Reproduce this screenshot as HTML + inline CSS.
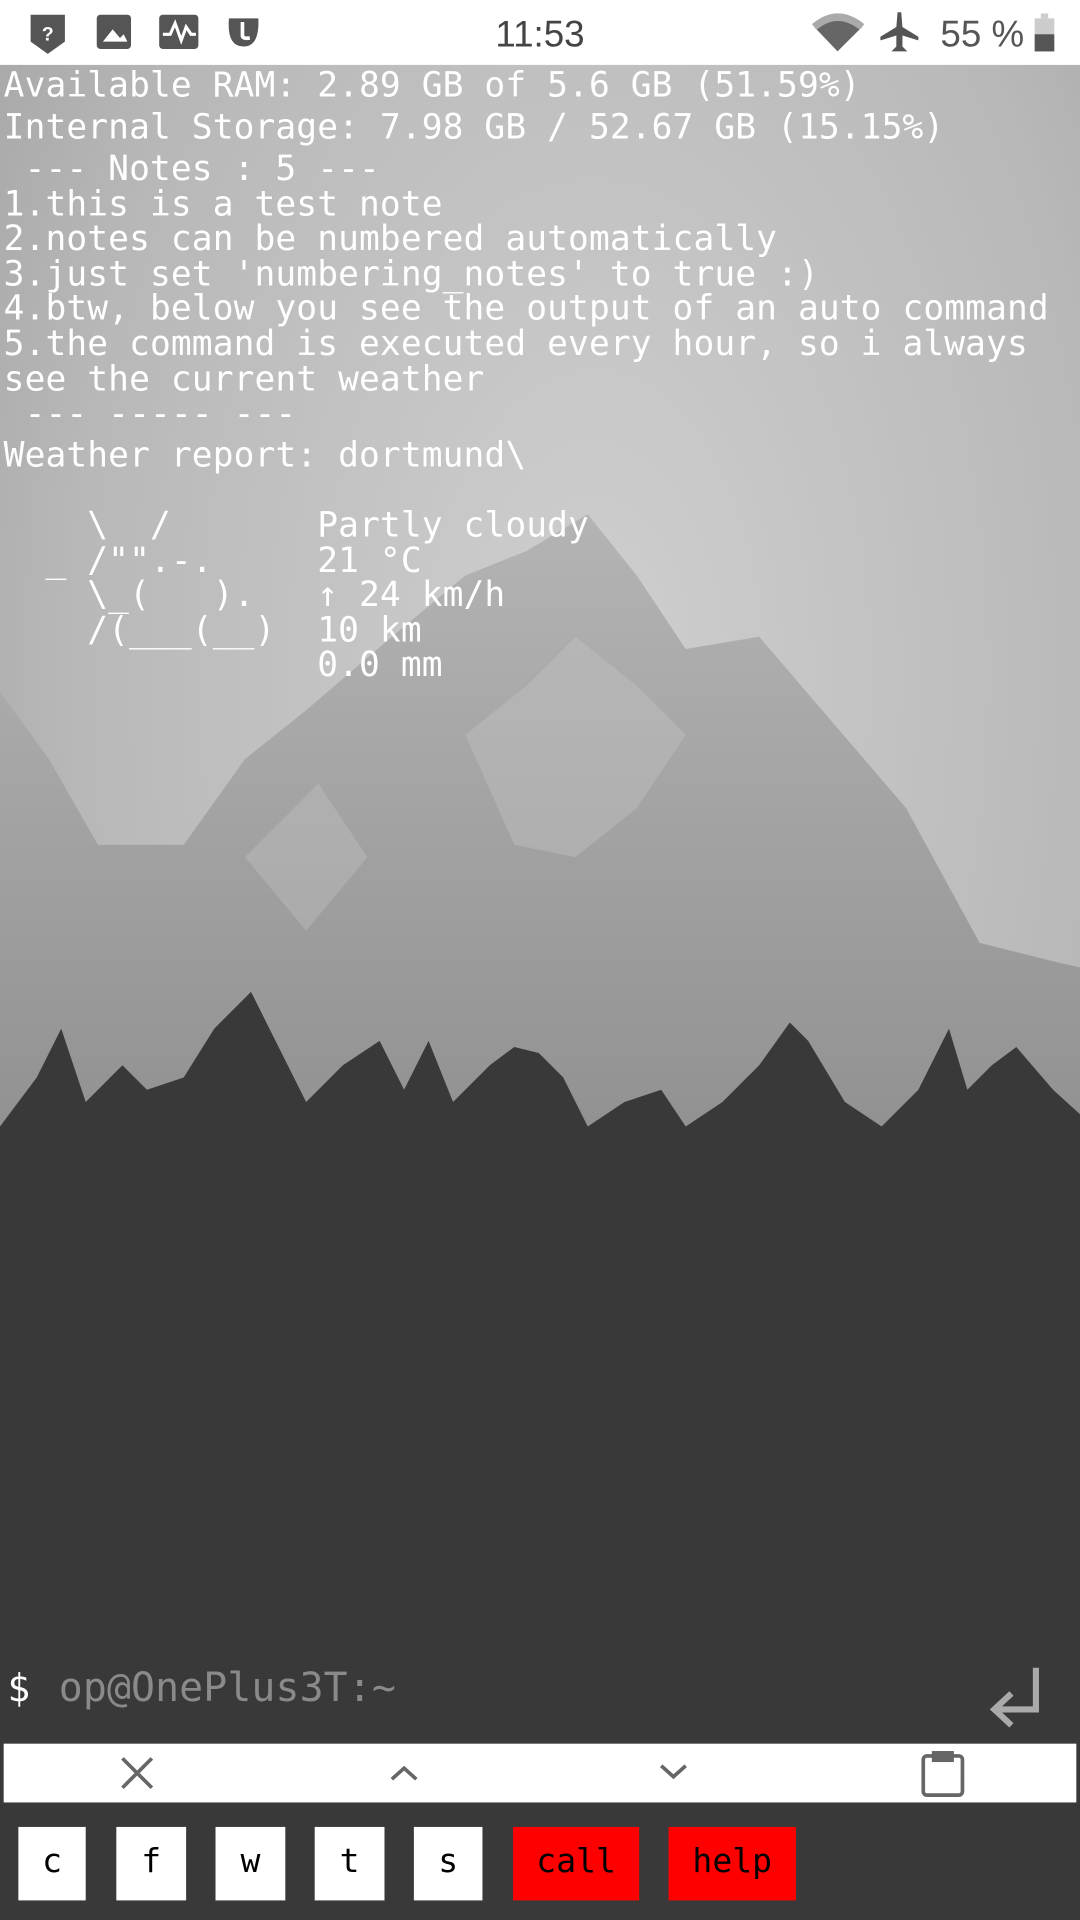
<!DOCTYPE html>
<html><head><meta charset="utf-8"><style>
html,body{margin:0;padding:0;width:1080px;height:1920px;overflow:hidden;background:#363638}
#s{position:absolute;left:0;top:0;width:882px;height:1568px;transform:scale(1.2244898);transform-origin:0 0;overflow:hidden}
.mono{font-family:"DejaVu Sans Mono","Liberation Mono",monospace;font-size:28.2px;color:#fff;white-space:pre;position:absolute;left:3px;letter-spacing:0.1px}
.st{position:absolute;top:0;left:0;width:882px;height:53px;background:#fff}
.bar{position:absolute;left:3px;top:1424px;width:876px;height:48px;background:#fff}
.k{position:absolute;top:1492px;height:60px;background:#fff;font-family:"DejaVu Sans Mono",monospace;font-size:27px;color:#000;text-align:center;line-height:58px}
.r{background:#f00}
</style></head><body><div id="s">
<svg width="882" height="1568" style="position:absolute;left:0;top:0">
<defs>
<radialGradient id="sky" cx="0.55" cy="0.35" r="0.8"><stop offset="0" stop-color="#cfcfcf"/><stop offset="0.6" stop-color="#b8b8b8"/><stop offset="1" stop-color="#9a9a9a"/></radialGradient>
<linearGradient id="mt" x1="0" y1="0" x2="0" y2="1"><stop offset="0" stop-color="#b4b4b4"/><stop offset="1" stop-color="#8c8c8c"/></linearGradient>
</defs>
<rect width="882" height="1568" fill="url(#sky)"/>
<polygon fill="url(#mt)" points="0,565 40,620 80,690 150,690 200,620 250,580 320,520 380,470 430,450 480,420 520,470 560,530 620,520 680,590 740,660 800,770 860,785 882,790 882,1000 0,1000"/>
<polygon fill="#c2c2c2" opacity="0.45" points="380,600 430,560 470,520 520,560 560,600 520,660 470,700 420,690"/>
<polygon fill="#c5c5c5" opacity="0.35" points="200,700 260,640 300,700 250,760"/>
<polygon fill="#39393a" points="0,920 30,880 50,840 70,900 100,870 120,890 150,880 175,840 205,810 225,850 250,900 280,870 310,850 330,890 350,850 370,900 400,870 420,855 440,860 460,880 480,920 510,900 540,890 560,920 590,900 620,870 645,835 660,850 690,900 720,920 750,890 775,840 790,890 810,870 830,855 860,890 882,910 882,1568 0,1568"/>
</svg>
<div class="st"></div>
<svg width="882" height="53" style="position:absolute;top:0;left:0">
<path d="M25 12 L53 12 L53 34 L39 44 L25 34 Z" fill="#555"/><text x="39" y="33" font-size="16" fill="#fff" text-anchor="middle" font-family="Liberation Sans" font-weight="bold">?</text>
<rect x="79" y="12" width="28" height="28" rx="3" fill="#555"/><path d="M84 34 L92 24 L98 31 L101 28 L104 34Z" fill="#fff"/>
<rect x="130" y="12" width="32" height="28" rx="3" fill="#555"/><path d="M133 28 L139 28 L143 19 L148 33 L152 22 L156 28 L160 28" stroke="#fff" stroke-width="2.5" fill="none"/>
<path d="M187 15 Q185 38 199 38 Q212 38 211 15 Z" fill="#555"/><path d="M198 18 L198 29 Q198 32 204 31" stroke="#fff" stroke-width="3" fill="none"/>
<text x="441" y="38" font-size="30" fill="#444" text-anchor="middle" font-family="Liberation Sans">11:53</text>
<path d="M665 22 Q684 6 704 22 L684 42 Z" fill="#666"/><path d="M665 22 Q684 6 704 22" stroke="#aaa" stroke-width="6" fill="none"/>
<path d="M733 10 L736 10 L737 22 L750 30 L750 33 L737 29 L737 38 L741 42 L728 42 L732 38 L732 29 L719 33 L719 30 L732 22Z" fill="#555"/>
<text x="768" y="38" font-size="30" fill="#555" font-family="Liberation Sans">55 %</text>
<rect x="845" y="15" width="16" height="27" fill="#ccc"/><rect x="850" y="11" width="6" height="4" fill="#ccc"/><rect x="845" y="28" width="16" height="14" fill="#555"/>
</svg>
<div class="mono" style="top:53px;line-height:34px">Available RAM: 2.89 GB of 5.6 GB (51.59%)
Internal Storage: 7.98 GB / 52.67 GB (15.15%)</div>
<div class="mono" style="top:124px;line-height:28.6px"> --- Notes : 5 ---
1.this is a test note
2.notes can be numbered automatically
3.just set 'numbering_notes' to true :)
4.btw, below you see the output of an auto command
5.the command is executed every hour, so i always
see the current weather
 --- ----- ---</div>
<div class="mono" style="top:357px;line-height:30px">Weather report: dortmund\</div>
<div class="mono" style="top:415px;line-height:28.6px">    \  /       Partly cloudy
  _ /"".-.     21 °C
    \_(   ).   ↑ 24 km/h
    /(___(__)  10 km
               0.0 mm</div>
<div class="mono" style="top:1361px;left:6px;font-size:31px">$</div>
<div class="mono" style="top:1359px;left:48px;font-size:32.5px;color:#8a8a8a">op@OnePlus3T:~</div>
<svg width="60" height="60" style="position:absolute;left:800px;top:1355px"><path d="M46 7 L46 41 L15 41 M26 28 L12 41 L26 54" stroke="#aaa" stroke-width="5" fill="none"/></svg>
<div class="bar"></div>
<svg width="882" height="48" style="position:absolute;left:0;top:1424px">
<path d="M100 12 L124 36 M124 12 L100 36" stroke="#666" stroke-width="3"/>
<path d="M320 29 L330 20 L340 29" stroke="#666" stroke-width="3" fill="none"/>
<path d="M540 18 L550 27 L560 18" stroke="#666" stroke-width="3" fill="none"/>
<rect x="754" y="10" width="32" height="32" rx="3" stroke="#666" stroke-width="3" fill="none"/><rect x="761" y="6" width="18" height="9" fill="#666"/>
</svg>
<div class="k" style="left:15px;width:55px">c</div>
<div class="k" style="left:95px;width:57px">f</div>
<div class="k" style="left:176px;width:57px">w</div>
<div class="k" style="left:257px;width:57px">t</div>
<div class="k" style="left:338px;width:56px">s</div>
<div class="k r" style="left:419px;width:103px">call</div>
<div class="k r" style="left:546px;width:104px">help</div>
</div></body></html>
